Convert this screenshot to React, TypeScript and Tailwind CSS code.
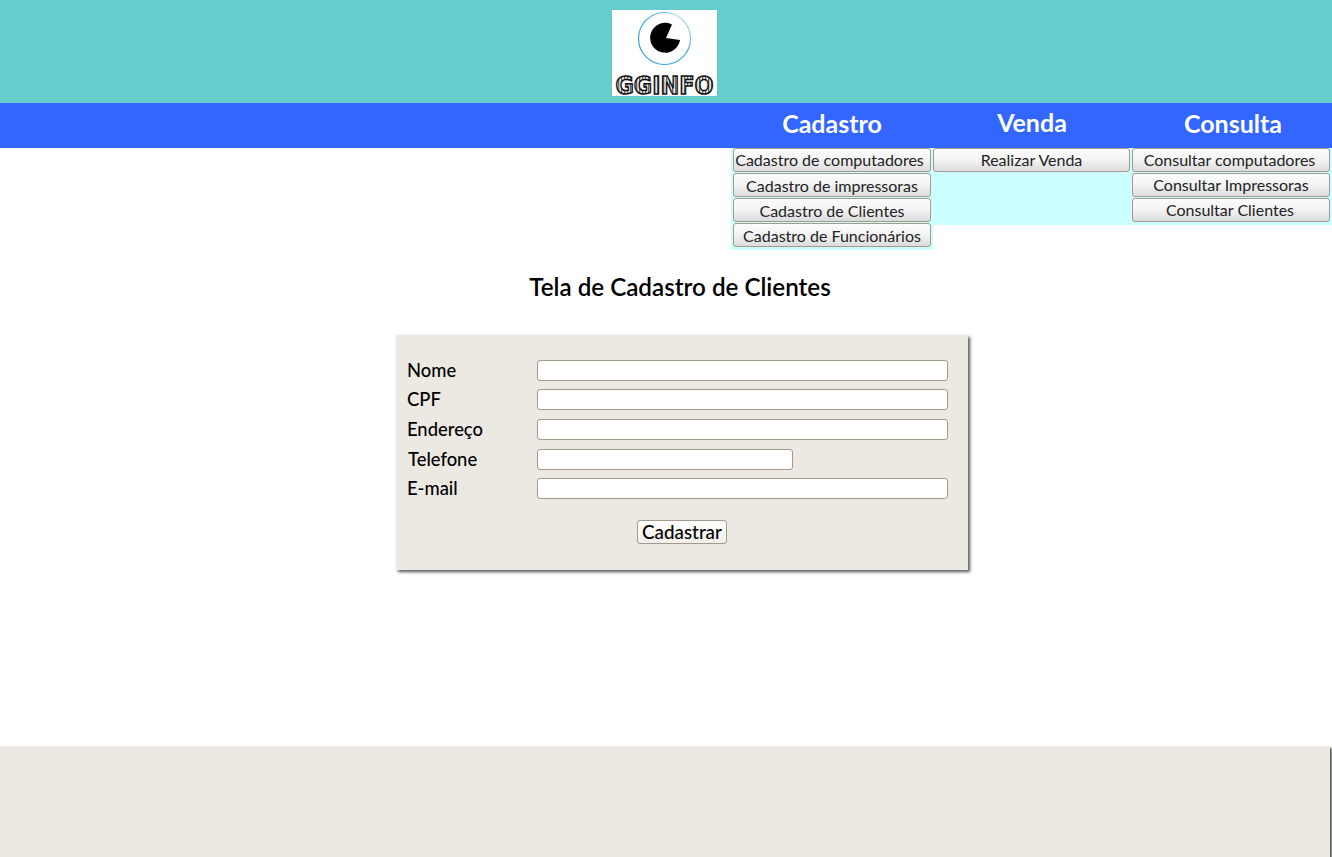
const btn =
  "h-6 w-full rounded-[3px] border border-[#a39a8d] bg-gradient-to-b from-[#fcfcfc] via-[#f3f3f3] to-[#dcdcdc] text-[16px] leading-[22px] text-[#222222] text-center whitespace-nowrap";
const field = "h-[21px] rounded-[3px] border border-[#a39a8d] bg-white";

function Logo() {
  return (
    <svg width="105" height="86" viewBox="0 0 105 86" className="block overflow-visible bg-white">
      <defs>
        <pattern id="stripes" width="3" height="20" patternUnits="userSpaceOnUse">
          <rect width="3" height="20" fill="#e4e4e4" />
          <rect width="1.3" height="20" fill="#666666" />
        </pattern>
        <linearGradient id="ring" x1="0" y1="1" x2="1" y2="0">
          <stop offset="0" stopColor="#2f9fd8" />
          <stop offset="0.6" stopColor="#3ea8dc" />
          <stop offset="1" stopColor="#dcecf4" />
        </linearGradient>
      </defs>
      <circle cx="52.5" cy="28.5" r="26" fill="none" stroke="url(#ring)" strokeWidth="1.2" />
      <path d="M54 28 L60 14.5 A15 15 0 1 0 68 30 Z" fill="#000000" />
      <text
        x="3.5"
        y="83.5"
        textLength="98"
        lengthAdjust="spacingAndGlyphs"
        fontFamily="'DejaVu Sans', sans-serif"
        fontWeight="700"
        fontSize="25"
        fill="url(#stripes)"
        stroke="#111111"
        strokeWidth="1.5"
      >
        GGINFO
      </text>
    </svg>
  );
}

function Row({ label, short, className }: { label: string; short?: boolean; className: string }) {
  return (
    <div className={`flex h-[21px] items-center ${className}`}>
      <label
        className={`-mt-px w-[130px] text-[18.4px] font-medium leading-none text-black ${
          label === "Telefone" ? "pl-px" : ""
        }`}
      >
        {label}
      </label>
      <input type="text" className={`${field} ${short ? "w-[256px]" : "w-[411px]"}`} />
    </div>
  );
}

export default function App() {
  return (
    <div className="min-h-[857px] bg-white font-['Lato',sans-serif]">
      <header className="h-[103px] bg-[#66cccc] pl-[612px] pt-[10px]">
        <Logo />
      </header>
      <nav className="h-[45px] bg-[#3366ff] pl-[731px]">
        <div className="grid grid-cols-[202px_198px_201px] text-center text-[25px] font-bold text-white">
          <div className="pt-[3px] leading-[34px]">Cadastro</div>
          <div className="pt-[2px] leading-[34px]">Venda</div>
          <div className="pl-[3px] pt-[3px] leading-[34px]">Consulta</div>
        </div>
      </nav>
      <div className="h-[102px] pl-[731px]">
        <div className="grid grid-cols-[202px_198px_201px] items-start">
          <div className="flex h-[102px] flex-col gap-px bg-[#ccffff] px-[2px]">
            <button className={`${btn} pr-[5px]`}>Cadastro de computadores</button>
            <button className={`${btn} pt-[1px]`}>Cadastro de impressoras</button>
            <button className={`${btn} pt-[1px]`}>Cadastro de Clientes</button>
            <button className={`${btn} pt-[1px]`}>Cadastro de Funcionários</button>
          </div>
          <div className="h-[77px] bg-[#ccffff] pr-px">
            <button className={btn}>Realizar Venda</button>
          </div>
          <div className="flex h-[77px] flex-col gap-px bg-[#ccffff] pl-px pr-[2px]">
            <button className={`${btn} pr-[3px]`}>Consultar computadores</button>
            <button className={btn}>Consultar Impressoras</button>
            <button className={`${btn} pr-[2px]`}>Consultar Clientes</button>
          </div>
        </div>
      </div>
      <h1 className="mt-[21px] w-[1360px] text-center text-[24.2px] font-semibold leading-[32px] text-black">
        Tela de Cadastro de Clientes
      </h1>
      <main className="ml-[396px] mt-[32px] h-[235px] w-[572px] bg-[#ece9e3] pl-[11px] pt-[25px] shadow-[2px_2px_3px_#555555]">
        <Row label="Nome" className="" />
        <Row label="CPF" className="mt-[8px]" />
        <Row label="Endereço" className="mt-[9px]" />
        <Row label="Telefone" short className="mt-[9px]" />
        <Row label="E-mail" className="mt-[8px]" />
        <div className="mt-[21px] pl-[230px]">
          <button className="h-6 w-[90px] rounded-[3px] border border-[#a39a8d] bg-gradient-to-b from-[#ffffff] to-[#f0efec] text-[18.8px] font-medium leading-[22px] text-black">
            Cadastrar
          </button>
        </div>
      </main>
      <footer className="mt-[176px] h-[111px] w-[1330px] bg-[#ece9e3] shadow-[2px_2px_2px_#555555]" />
    </div>
  );
}
